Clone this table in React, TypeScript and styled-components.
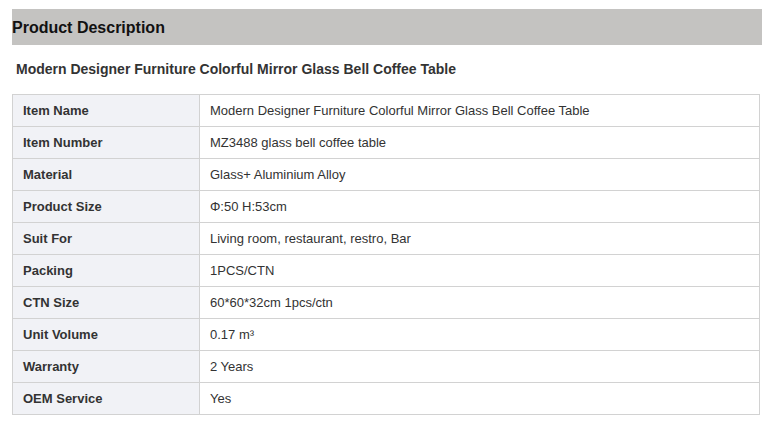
import React from 'react';
import styled, { createGlobalStyle } from 'styled-components';

const GlobalStyle = createGlobalStyle`
  body {
    margin: 0;
    background: #fff;
    font-family: Arial, "Liberation Sans", sans-serif;
  }
`;

const rows: [string, string][] = [
  ['Item Name', 'Modern Designer Furniture Colorful Mirror Glass Bell Coffee Table'],
  ['Item Number', 'MZ3488 glass bell coffee table'],
  ['Material', 'Glass+ Aluminium Alloy'],
  ['Product Size', 'Φ:50 H:53cm'],
  ['Suit For', 'Living room, restaurant, restro, Bar'],
  ['Packing', '1PCS/CTN'],
  ['CTN Size', '60*60*32cm 1pcs/ctn'],
  ['Unit Volume', '0.17 m³'],
  ['Warranty', '2 Years'],
  ['OEM Service', 'Yes'],
];

const App = () => {
  return (
    <>
      <GlobalStyle />
      <Page>
        <SectionBar>Product Description</SectionBar>
        <Subtitle>Modern Designer Furniture Colorful Mirror Glass Bell Coffee Table</Subtitle>
        <SpecTable>
          <tbody>
            {rows.map(([label, value]) => (
              <tr key={label}>
                <LabelCell>{label}</LabelCell>
                <ValueCell>{value}</ValueCell>
              </tr>
            ))}
          </tbody>
        </SpecTable>
      </Page>
    </>
  );
};

export default App;

const Page = styled.div`
  padding: 9px 5px 0 12px;
  width: 750px;
`;

const SectionBar = styled.div`
  height: 36px;
  line-height: 38px;
  background: #c4c3c1;
  font-size: 16px;
  font-weight: 700;
  color: #111;
`;

const Subtitle = styled.h2`
  margin: 0;
  padding: 15px 0 0 4px;
  height: 33px;
  box-sizing: border-box;
  font-size: 14px;
  line-height: 18px;
  font-weight: 700;
  color: #333;
`;

const SpecTable = styled.table`
  margin-top: 16px;
  width: 748px;
  border-collapse: collapse;
  border: 1px solid #cfcfcf;
  font-size: 13px;
  color: #333;
`;

const LabelCell = styled.td`
  width: 176px;
  height: 31px;
  padding: 0 0 0 10px;
  border: 1px solid #d2d2d2;
  background: #f1f2f6;
  font-weight: 700;
`;

const ValueCell = styled.td`
  height: 31px;
  padding: 0 0 0 10px;
  border: 1px solid #d2d2d2;
  background: #fff;
`;
